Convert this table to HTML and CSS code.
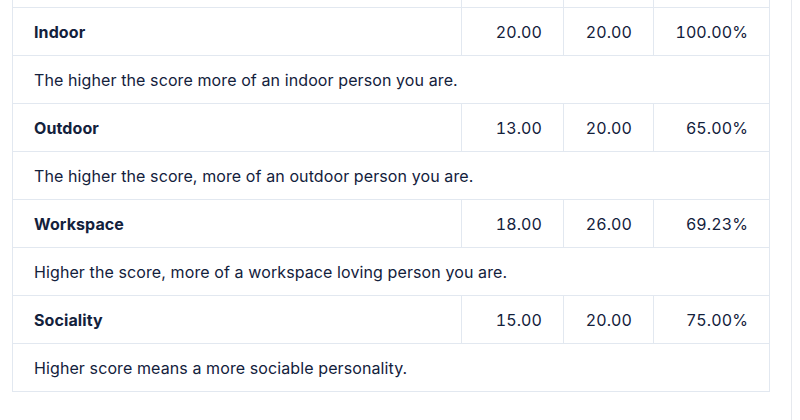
FILE: index.html
```html
<!DOCTYPE html>
<html>
<head>
<meta charset="utf-8">
<link rel="stylesheet" href="styles.css">
</head>
<body>
<div class="page">
  <div class="main">
    <div class="table">
      <div class="cell name"></div>
      <div class="cell num"></div>
      <div class="cell num"></div>
      <div class="cell num"></div>

      <div class="cell name">Indoor</div>
      <div class="cell num">20.00</div>
      <div class="cell num">20.00</div>
      <div class="cell num">100.00%</div>
      <div class="cell desc">The higher the score more of an indoor person you are.</div>

      <div class="cell name">Outdoor</div>
      <div class="cell num">13.00</div>
      <div class="cell num">20.00</div>
      <div class="cell num">65.00%</div>
      <div class="cell desc">The higher the score, more of an outdoor person you are.</div>

      <div class="cell name">Workspace</div>
      <div class="cell num">18.00</div>
      <div class="cell num">26.00</div>
      <div class="cell num">69.23%</div>
      <div class="cell desc">Higher the score, more of a workspace loving person you are.</div>

      <div class="cell name">Sociality</div>
      <div class="cell num">15.00</div>
      <div class="cell num">20.00</div>
      <div class="cell num">75.00%</div>
      <div class="cell desc">Higher score means a more sociable personality.</div>
    </div>
  </div>
</div>
</body>
</html>
```
FILE: styles.css
```css
html, body {
  margin: 0;
  padding: 0;
  background: #ffffff;
}
body {
  font-family: Inter, "Noto Sans", "Liberation Sans", sans-serif;
  color: #13213c;
  font-size: 16px;
  letter-spacing: 0.1px;
  overflow: hidden;
}
.page {
  display: flex;
  height: 420px;
  overflow: hidden;
}
.main {
  width: 792px;
  box-sizing: border-box;
  border-right: 1px solid #e6e9ee;
  padding-left: 12px;
}
.table {
  display: grid;
  grid-template-columns: 449px 102px 90px 116px;
  border-left: 1px solid #e2e8f0;
  width: 758px;
  box-sizing: border-box;
  margin-top: -40px;
}
.cell {
  height: 48px;
  box-sizing: border-box;
  border-bottom: 1px solid #e2e8f0;
  border-right: 1px solid #e2e8f0;
  display: flex;
  align-items: center;
  padding: 0 21px;
}
.name {
  font-weight: 700;
}
.num {
  justify-content: flex-end;
  font-variant-numeric: tabular-nums;
}
.desc {
  grid-column: 1 / -1;
}
```
